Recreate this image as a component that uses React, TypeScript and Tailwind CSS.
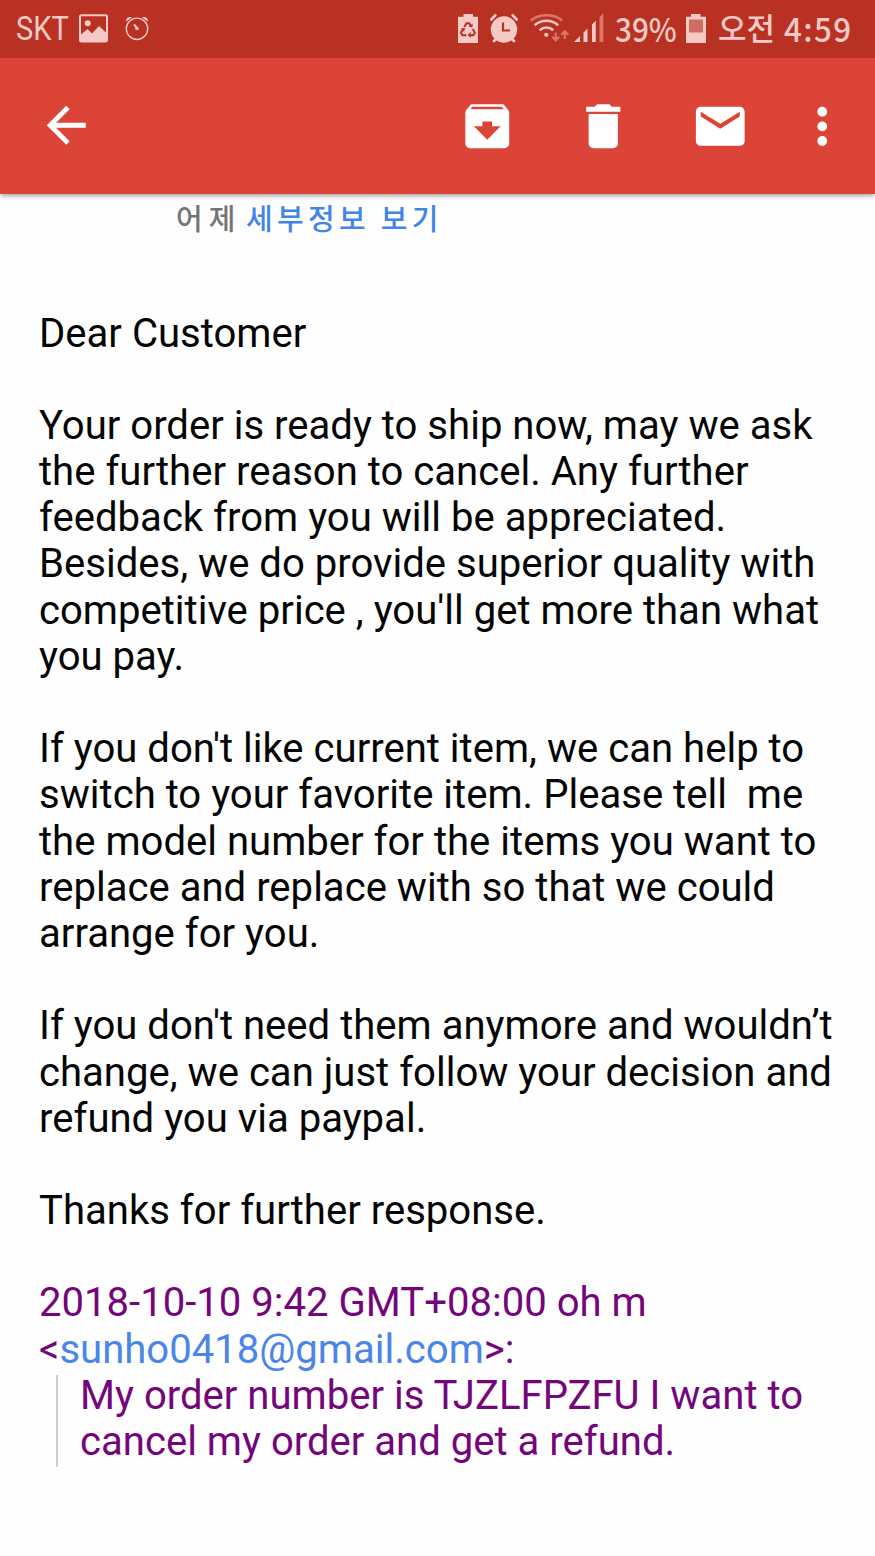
import type { ReactNode } from 'react'

const MESSAGE = [
  'Dear Customer',
  '',
  'Your order is ready to ship now, may we ask',
  'the further reason to cancel. Any further',
  'feedback from you will be appreciated.',
  'Besides, we do provide superior quality with',
  "competitive price , you'll get more than what",
  'you pay.',
  '',
  "If you don't like current item, we can help to",
  'switch to your favorite item. Please tell  me',
  'the model number for the items you want to',
  'replace and replace with so that we could',
  'arrange for you.',
  '',
  "If you don't need them anymore and wouldn’t",
  'change, we can just follow your decision and',
  'refund you via paypal.',
  '',
  'Thanks for further response.',
  '',
]

const QUOTE = ['My order number is TJZLFPZFU I want to', 'cancel my order and get a refund.']

function Line({ children }: { children?: ReactNode }) {
  return <p className="h-[46.2px] whitespace-pre">{children}</p>
}

function ToolbarIcon({ d, className = '' }: { d: string; className?: string }) {
  return (
    <svg viewBox="0 0 24 24" fill="currentColor" className={`size-[58.5px] shrink-0 ${className}`}>
      <path d={d} />
    </svg>
  )
}

function StatusBar() {
  return (
    <div className="flex h-[58px] items-center bg-[#b93122] pl-[16px] text-[#f5cac6]">
      <span className="w-[63px] shrink-0">
        <span className="inline-block origin-left scale-x-[0.88] font-['Roboto',sans-serif] text-[33px] leading-[58px]">SKT</span>
      </span>
      {/* picture */}
      <svg className="h-[30px] w-[29px]" viewBox="0 0 29 30" fill="none">
        <rect x="1" y="1.2" width="27" height="26.2" rx="1.5" stroke="currentColor" strokeWidth="2" />
        <circle cx="8.7" cy="9.2" r="3" fill="currentColor" />
        <path d="M2 20.5 8.5 15l4.5 4.5 7-7.5 7.5 7V27H2z" fill="currentColor" />
      </svg>
      {/* alarm outline */}
      <svg className="ml-[17px] h-[30px] w-[25px]" viewBox="0 0 25 30" fill="none" stroke="currentColor">
        <circle cx="12" cy="14.8" r="10.7" strokeWidth="1.4" />
        <path d="M1.2 7.5C.7 4 3.5 2.3 7 3.4zM22.8 7.5c.5-3.5-2.3-5.2-5.8-4.1z" fill="currentColor" stroke="none" />
        <circle cx="12" cy="14.5" r="1.8" fill="currentColor" stroke="none" />
        <path d="m9 10.5 2.5 3" strokeWidth="2" />
      </svg>

      {/* battery saver */}
      <svg className="ml-auto h-[30px] w-[20px]" viewBox="0 0 20 30">
        <path d="M5.5 0h9.5v2.7h5V29H0V2.7h5.5z" fill="currentColor" />
        <g fill="none" stroke="#b93122" strokeWidth="2">
          <path d="m6.2 13 2.3-3.8h2.6l2 3.2M4.8 15.2 3 18.8l1.3 2.4h4M14.8 15l2 3.8-1.3 2.4h-3.3" />
        </g>
        <path d="m14.8 9.8-.5 4-3.6-1.6zM3 14.2l4-.2-1 4zM12.8 18v6l-3.2-3z" fill="#b93122" />
      </svg>
      {/* alarm */}
      <svg className="ml-[11px] h-[30px] w-[30px]" viewBox="0 0 30 30" fill="none" stroke="currentColor" strokeLinecap="round">
        <circle cx="15" cy="15.5" r="13.2" fill="currentColor" stroke="none" />
        <path d="m2.4 5.4 3.8-4M23.8 1.4l3.8 4M5 27l2-2M25 27l-2-2" strokeWidth="2.8" />
        <path d="M14 8.5v8h7" stroke="#b93122" strokeWidth="2.2" strokeLinecap="butt" />
      </svg>
      {/* wifi */}
      <svg className="ml-[11px] h-[30px] w-[40px]" viewBox="0 0 40 30" fill="none" stroke="currentColor" strokeWidth="2.6">
        <path d="M.8 6.5c9-7 22.5-7 31.5 0" stroke="#dc766c" />
        <path d="M4.7 11.3c6.8-6 16.7-6 23.5 0M9.7 16.3c4-3.7 9.5-3.7 13.5 0" />
        <circle cx="16.3" cy="20.8" r="2.1" fill="currentColor" stroke="none" />
        <path d="M25.7 18.5V26m-3.5-3.3 3.5 3.5 3.5-3.5M34.8 25v-7.5m-3.5 3.3 3.5-3.5 3.5 3.5" stroke="#dc766c" strokeWidth="2.1" />
      </svg>
      {/* signal */}
      <svg className="ml-[4px] h-[30px] w-[30px]" viewBox="0 0 30 30" fill="currentColor">
        <path d="M0 28h6v-6zM9.5 28v-9.5l4-4V28zM18 28V10.5l3.8-3.8V28z" />
        <path d="M25.5 28V3l3.8-3.8V28z" fill="#dc766c" />
      </svg>
      <span className="ml-[11px] w-[71px] pb-[2px]">
        <span className="inline-block origin-left scale-x-[0.9] font-['Noto_Sans_CJK_KR',sans-serif] text-[33px] leading-[56px] font-medium">39%</span>
      </span>
      <svg className="h-[30px] w-[20px]" viewBox="0 0 20 30">
        <path d="M5 0h9.5v2.7H20V29H0V2.7h5z" fill="currentColor" />
        <path d="M3 5.5h14v13H3z" fill="#cf6d64" />
      </svg>
      <span className="ml-[12px] w-[66px] pb-[4px] whitespace-nowrap font-['Noto_Sans_CJK_KR',sans-serif] text-[31px] leading-[54px] font-medium">오전</span>
      <span className="w-[91px] pb-[2px] whitespace-nowrap">
        <span className="inline-block origin-left scale-x-[0.95] font-['Noto_Sans_CJK_KR',sans-serif] text-[33px] leading-[56px] font-medium tracking-[1.5px]">4:59</span>
      </span>
    </div>
  )
}

function Toolbar() {
  return (
    <div className="flex h-[136px] items-center bg-[#dc4437] pr-[24px] pl-[37px] text-white shadow-[0_3px_4px_-1px_rgba(0,0,0,0.35)]">
      <ToolbarIcon className="mb-[1px]" d="M20 11H7.83l5.59-5.59L12 4l-8 8 8 8 1.41-1.41L7.83 13H20v-2z" />
      <ToolbarIcon
        className="ml-auto"
        d="M20.54 5.23l-1.39-1.68C18.88 3.21 18.47 3 18 3H6c-.47 0-.88.21-1.16.55L3.46 5.23C3.17 5.57 3 6.02 3 6.5V19c0 1.1.9 2 2 2h14c1.1 0 2-.9 2-2V6.5c0-.48-.17-.93-.46-1.27zM12 17.5L6.5 12H10v-2h4v2h3.5L12 17.5zM5.12 5l.81-1h12l.94 1H5.12z"
      />
      <ToolbarIcon
        className="ml-[58px]"
        d="M6 19c0 1.1.9 2 2 2h8c1.1 0 2-.9 2-2V7H6v12zM19 4h-3.5l-1-1h-5l-1 1H5v2h14V4z"
      />
      <ToolbarIcon
        className="ml-[58px]"
        d="M20 4H4c-1.1 0-1.99.9-1.99 2L2 18c0 1.1.9 2 2 2h16c1.1 0 2-.9 2-2V6c0-1.1-.9-2-2-2zm0 4l-8 5-8-5V6l8 5 8-5v2z"
      />
      <ToolbarIcon
        className="ml-[43.5px]"
        d="M12 8c1.1 0 2-.9 2-2s-.9-2-2-2-2 .9-2 2 .9 2 2 2zm0 2c-1.1 0-2 .9-2 2s.9 2 2 2 2-.9 2-2-.9-2-2-2zm0 6c-1.1 0-2 .9-2 2s.9 2 2 2 2-.9 2-2-.9-2-2-2z"
      />
    </div>
  )
}

export default function App() {
  return (
    <div className="h-[1556px] w-[875px] overflow-hidden bg-[#fefefe]">
      <StatusBar />
      <Toolbar />
      <div className="flex h-[118.5px] pl-[176px] pt-[3px] font-['Noto_Sans_CJK_KR',sans-serif] leading-[40px] font-medium">
        <span className="w-[70px] text-[29px] tracking-[6px] text-[#757575]">어제</span>
        <a className="text-[29px] tracking-[4.3px] text-[#4285e8]">세부정보 보기</a>
      </div>
      <main className="pl-[39px] font-['Roboto',sans-serif] text-[40.1px] leading-[42px] text-[#050505]">
        {MESSAGE.map((text, i) => (
          <Line key={i}>{text}</Line>
        ))}
        <div className="text-[#75057a]">
          <Line>2018-10-10 9:42 GMT+08:00 oh m</Line>
          <Line>
            &lt;<a className="text-[#4a86e8]">sunho0418@gmail.com</a>&gt;:
          </Line>
          <blockquote className="ml-[17px] border-l-2 border-[#ccc] pl-[22px]">
            {QUOTE.map((text) => (
              <Line key={text}>{text}</Line>
            ))}
          </blockquote>
        </div>
      </main>
    </div>
  )
}
